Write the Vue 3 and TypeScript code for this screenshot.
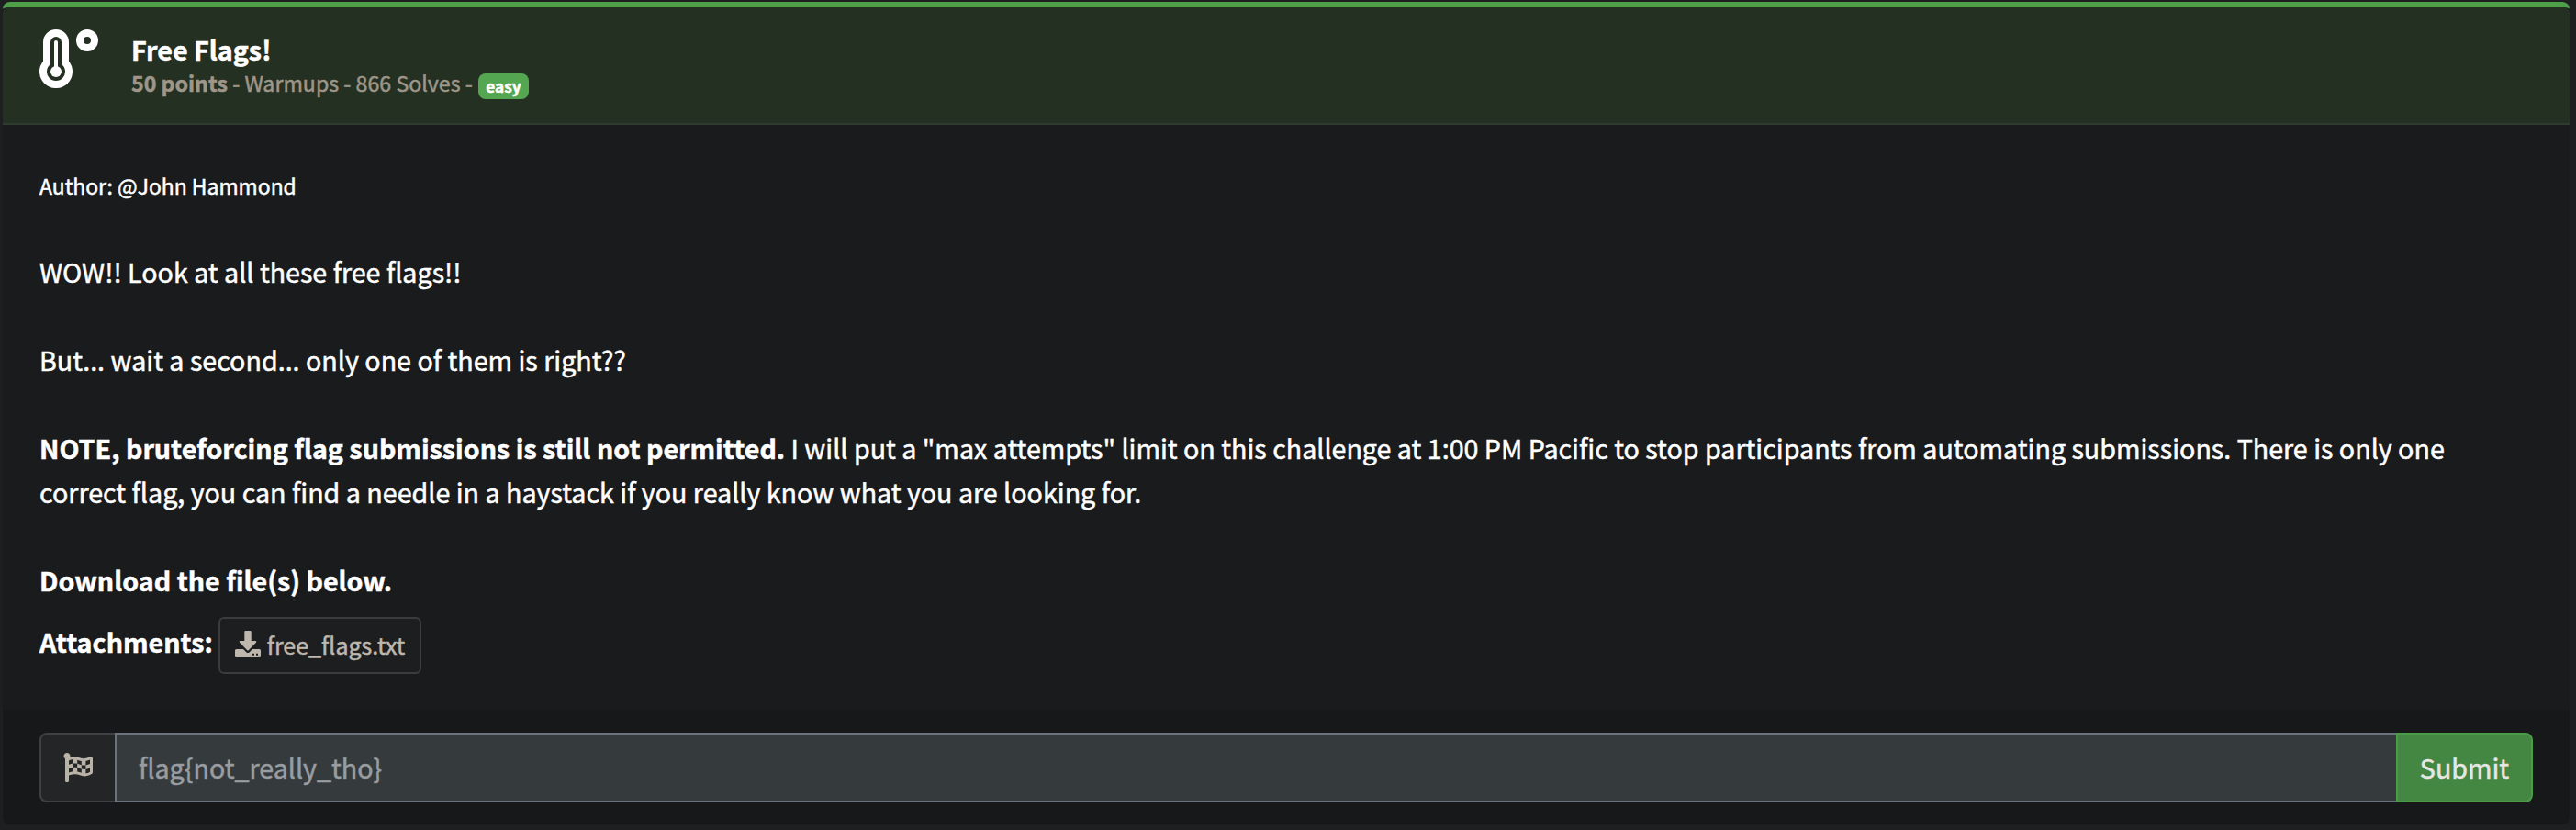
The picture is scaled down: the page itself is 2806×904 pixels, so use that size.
<script setup lang="ts">
interface Challenge {
  title: string
  points: number
  category: string
  solves: number
  difficulty: string
  author: string
  file: string
}

const challenge: Challenge = {
  title: 'Free Flags!',
  points: 50,
  category: 'Warmups',
  solves: 866,
  difficulty: 'easy',
  author: '@John Hammond',
  file: 'free_flags.txt',
}
</script>

<template>
  <main class="page">
    <article class="card">
      <header class="card-header">
        <svg class="thermo" viewBox="0 0 64 64" fill="none" stroke="#fff">
          <path fill="#fff" stroke="none" fill-rule="evenodd" d="M4 14a14 14 0 0 1 28 0V34.7A18 18 0 1 1 4 34.7ZM12 14V38A10 10 0 1 0 24 38V14a6 6 0 0 0-12 0Z" />
          <circle cx="18" cy="46" r="6" fill="#fff" stroke="none" />
          <path d="M18 14V44" stroke-width="4" stroke-linecap="round" />
          <circle cx="52" cy="12" r="8" stroke-width="8" />
        </svg>
        <div class="heading">
          <h1 class="title">{{ challenge.title }}</h1>
          <div class="meta">
            <span class="meta-text"><b>{{ challenge.points }} points</b> - {{ challenge.category }} - {{ challenge.solves }} Solves - </span>
            <span class="badge">{{ challenge.difficulty }}</span>
          </div>
        </div>
      </header>

      <section class="card-body">
        <p class="author">Author: {{ challenge.author }}</p>
        <p>WOW!! Look at all these free flags!!</p>
        <p>But... wait a second... only one of them is right??</p>
        <p><b>NOTE, bruteforcing flag submissions is still not permitted.</b> I will put a "max attempts" limit on this challenge at 1:00 PM Pacific to stop participants from automating submissions. There is only one<br />correct flag, you can find a needle in a haystack if you really know what you are looking for.</p>
        <p class="last"><b>Download the file(s) below.</b></p>
        <div class="attachments">
          <b class="label">Attachments:</b>
          <button class="file" type="button">
            <svg class="download" viewBox="0 0 28 29" fill="currentColor">
              <path d="M11.300 0h5.400a1 1 0 0 1 1 1v10h4.600a1 1 0 0 1 .7 1.700l-8.300 8.500a1 1 0 0 1-1.400 0L5 12.700a1 1 0 0 1 .7-1.700h4.600V1a1 1 0 0 1 1-1Z" />
              <path fill-rule="evenodd" d="M1.500 20H9l3.200 3.200a2.600 2.600 0 0 0 3.600 0L19 20h7.500A1.500 1.500 0 0 1 28 21.500v6a1.500 1.500 0 0 1-1.500 1.500h-25A1.500 1.500 0 0 1 0 27.500v-6A1.500 1.500 0 0 1 1.500 20ZM19 24.800h2v2h-2zM23 24.800h2v2h-2z" />
            </svg>
            <span>{{ challenge.file }}</span>
          </button>
        </div>
      </section>

      <footer class="card-footer">
        <span class="prefix">
          <svg class="flag" viewBox="0 0 512 512" fill="currentColor">
            <path d="M243.2 189.900V258c26.100 5.900 49.300 15.600 73.600 22.300v-68.200c-26-5.800-49.400-15.500-73.600-22.200zm223.300-123c-34.300 15.900-76.500 31.900-117 31.900C296 98.800 251.700 64 184.300 64c-25 0-47.300 4.400-68 12 2.800-7.300 4.100-15.200 3.600-23.600C118.100 24 94.800 1.200 66.300 0 34.300-1.300 8 24.300 8 56c0 19 9.500 35.800 24 45.900V488c0 13.300 10.700 24 24 24h16c13.300 0 24-10.700 24-24v-94.400c28.300-12.100 63.600-22.100 114.400-22.100 53.600 0 97.800 34.800 165.200 34.800 48.200 0 86.700-16.300 122.500-40.900 8.700-6 13.800-15.800 13.800-26.400V95.900c.1-23.300-24.200-38.800-45.400-29zM169.600 325.500c-25.800 2.700-50 8.200-73.600 16.600v-70.500c26.200-9.300 47.500-15 73.600-17.400v71.300zM464 191c-23.600 9.800-46.300 19.500-73.600 23.900V286c24.800-3.400 51.400-11.800 73.600-26v70.500c-25.100 16.100-48.500 24.700-73.600 27.100V286c-27 3.700-47.900 1.500-73.600-5.600v67.400c-23.900-7.400-47.300-16.700-73.600-21.300V258c-19.700-4.400-40.800-6.800-73.600-3.800v-70c-22.400 3.100-44.600 10.200-73.600 20.900v-70.500c33.200-12.200 50.100-19.800 73.600-22v71.600c27-3.700 48.400-1.300 73.600 5.700v-67.400c23.700 7.400 47.200 16.700 73.600 21.300v68.400c23.700 5.300 47.600 6.900 73.600 2.700V143c27-4.800 52.300-13.600 73.600-22.500z" />
          </svg>
        </span>
        <input class="answer" type="text" placeholder="flag{not_really_tho}" />
        <button class="submit" type="button">Submit</button>
      </footer>
    </article>
  </main>
</template>

<style>
body {
  margin: 0;
  background: #1e1f21;
}
</style>

<style scoped>
.page,
.page * {
  box-sizing: border-box;
}
.page {
  height: 904px;
  padding: 2px 7px 6px 3px;
  background: #1e1f21;
  color: #fff;
  font-family: "Noto Sans CJK SC", "Noto Sans", sans-serif;
  font-size: 28.65px;
  line-height: 48px;
  -webkit-text-stroke: 0.5px currentColor;
  overflow: hidden;
}
.card {
  display: flex;
  flex-direction: column;
  height: 896px;
  border-radius: 8px;
  border-top: 6px solid #4f9f4a;
  background: #1a1b1d;
}
.card-header {
  display: flex;
  height: 128px;
  padding: 24px 40px 0;
  border-radius: 6px 6px 0 0;
  background: #243022;
  border-bottom: 2px solid #2e3b2f;
}
.thermo {
  width: 64px;
  height: 64px;
  margin-right: 36px;
}
.heading {
  padding-top: 5px;
}
.title {
  margin: 0;
  font-size: 28.65px;
  line-height: 34px;
  font-weight: 700;
}
.meta {
  display: flex;
  align-items: flex-start;
  padding-top: 9px;
  font-size: 23.2px;
  line-height: 28px;
  color: #9e9689;
}
.meta-text {
  width: 378px;
  margin-top: -4px;
  white-space: pre;
}
.badge {
  width: 55px;
  height: 28px;
  border-radius: 8px;
  background: #54a651;
  color: #fff;
  font-size: 17.2px;
  font-weight: 700;
  line-height: 27px;
  text-align: center;
}
.card-body {
  flex: 1;
  padding: 40px 40px 0;
}
.card-body p {
  margin: 0 0 48px;
  white-space: nowrap;
}
.card-body .author {
  height: 48px;
  font-size: 22.9px;
  line-height: 52px;
}
.card-body .last {
  margin-bottom: 16px;
}
.attachments {
  display: flex;
  gap: 6px;
}
.label {
  padding-top: 3px;
}
.file {
  display: flex;
  align-items: center;
  width: 221px;
  height: 62px;
  padding: 0 0 3px 16px;
  border: 2px solid #3c3c3e;
  border-radius: 6px;
  background: #1d1e20;
  color: #beb7ad;
  font: inherit;
  font-size: 25.06px;
  gap: 7px;
}
.download {
  flex: none;
  width: 28px;
  height: 29px;
}
.card-footer {
  display: flex;
  height: 125px;
  padding: 25px 40px 24px;
  border-radius: 0 0 8px 8px;
  background: #17181a;
}
.prefix {
  display: flex;
  align-items: center;
  justify-content: center;
  width: 82px;
  height: 76px;
  border: 2px solid #3f4042;
  border-right: 0;
  border-radius: 8px 0 0 8px;
  background: #242527;
  color: #b9b2a7;
}
.flag {
  width: 32px;
  height: 32px;
}
.answer {
  flex: 1;
  height: 76px;
  padding: 0 24px 1px;
  border: 2px solid #6b727b;
  border-right: 0;
  border-radius: 0;
  background: #353a3d;
  color: #fff;
  font: inherit;
  outline: none;
}
.answer::placeholder {
  color: #999da1;
  opacity: 1;
}
.submit {
  width: 149px;
  height: 76px;
  padding: 0 0 1px;
  border: 2px solid #4b9c48;
  border-radius: 0 8px 8px 0;
  background: #438742;
  color: #e8e6e3;
  font: inherit;
}
</style>
